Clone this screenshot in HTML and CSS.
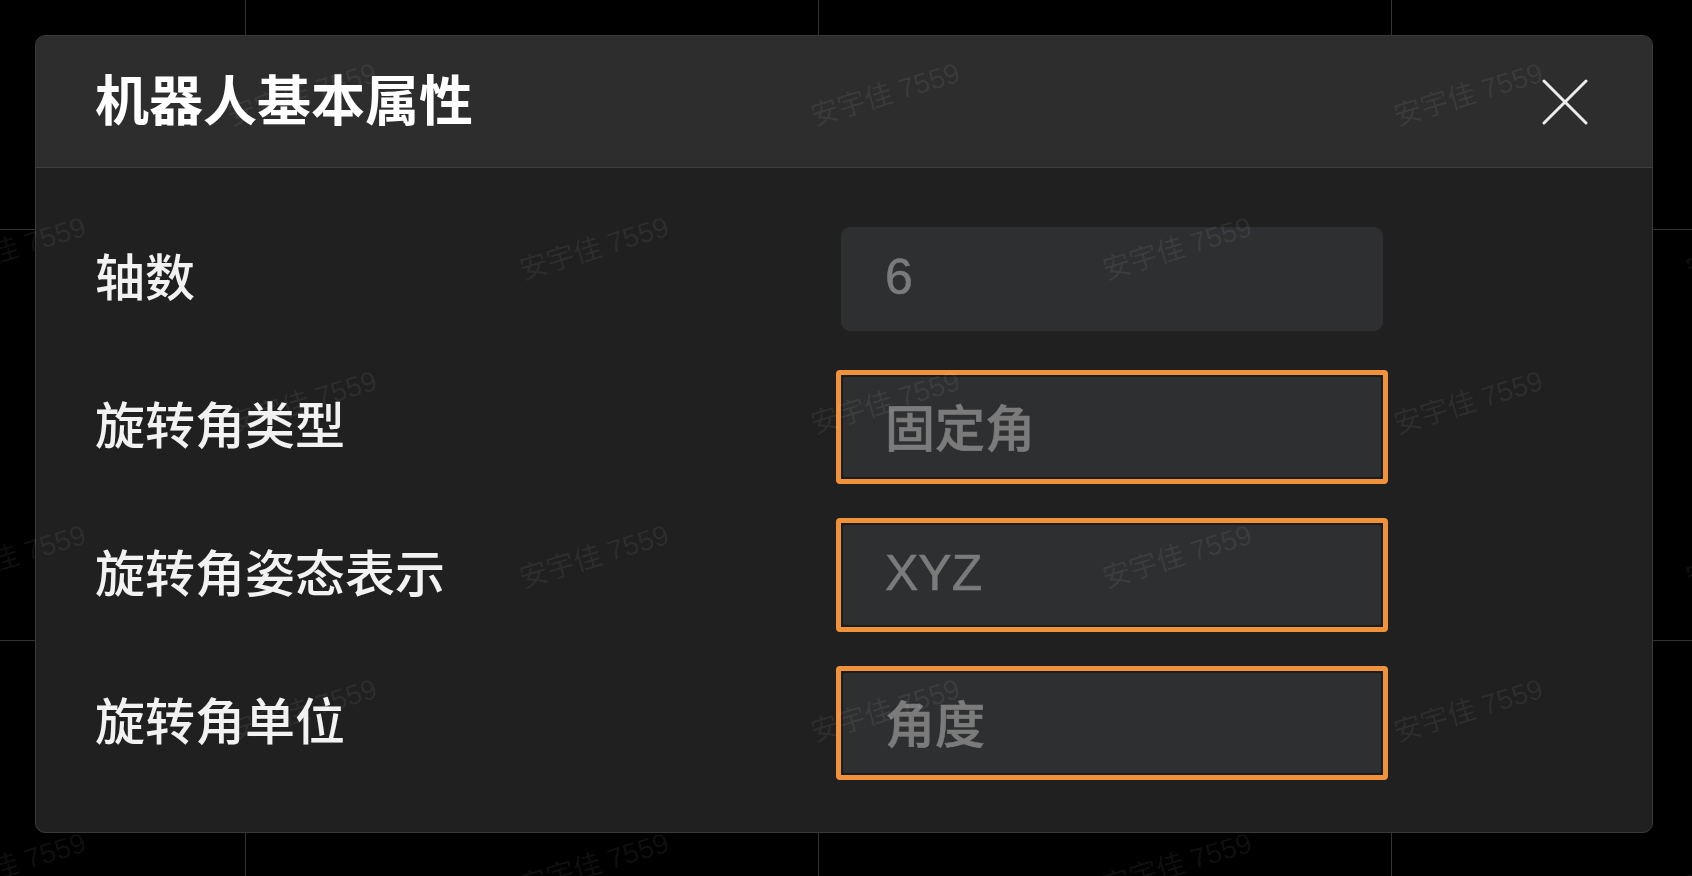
FILE: index.html
```html
<!DOCTYPE html>
<html lang="zh-CN">
<head>
  <meta charset="UTF-8">
  <meta name="viewport" content="width=device-width, initial-scale=1.0">
  <title>机器人基本属性</title>
  <link rel="stylesheet" href="styles.css">
</head>
<body>

  <div class="dialog" id="robotDialog">
    <div class="dialog-header">
      <h2 class="dialog-title">机器人基本属性</h2>
      <button class="close-btn" type="button" aria-label="关闭">
        <svg width="46" height="46" viewBox="0 0 46 46">
          <path d="M2 2 L44 44 M44 2 L2 44" stroke="#ececec" stroke-width="3" stroke-linecap="round" fill="none"/>
        </svg>
      </button>
    </div>

    <div class="dialog-body">
      <!-- Axis count -->
      <div class="form-row">
        <label for="axes">轴数</label>
        <div class="field">
          <input type="text" id="axes" value="6" readonly>
        </div>
      </div>

      <!-- Rotation type -->
      <div class="form-row">
        <label for="rotType">旋转角类型</label>
        <div class="field marked">
          <input type="text" id="rotType" value="固定角" readonly>
        </div>
      </div>

      <!-- Rotation notation -->
      <div class="form-row">
        <label for="rotOrder">旋转角姿态表示</label>
        <div class="field marked">
          <input type="text" id="rotOrder" value="XYZ" readonly>
        </div>
      </div>

      <!-- Rotation unit -->
      <div class="form-row">
        <label for="rotUnit">旋转角单位</label>
        <div class="field marked">
          <input type="text" id="rotUnit" value="角度" readonly>
        </div>
      </div>
    </div>
  </div>

  <!-- Watermark overlay -->
  <div class="watermark">
    <div class="wm-row"><span>安宇佳 7559</span><span>安宇佳 7559</span><span>安宇佳 7559</span></div>
    <div class="wm-row odd"><span>安宇佳 7559</span><span>安宇佳 7559</span><span>安宇佳 7559</span><span>安宇佳 7559</span></div>
    <div class="wm-row"><span>安宇佳 7559</span><span>安宇佳 7559</span><span>安宇佳 7559</span></div>
    <div class="wm-row odd"><span>安宇佳 7559</span><span>安宇佳 7559</span><span>安宇佳 7559</span><span>安宇佳 7559</span></div>
    <div class="wm-row"><span>安宇佳 7559</span><span>安宇佳 7559</span><span>安宇佳 7559</span></div>
    <div class="wm-row odd"><span>安宇佳 7559</span><span>安宇佳 7559</span><span>安宇佳 7559</span><span>安宇佳 7559</span></div>
  </div>

</body>
</html>
```

FILE: styles.css
```css
/* Page with faint grid behind the dialog */
html, body {
  margin: 0;
  padding: 0;
}

body {
  position: relative;
  width: 1692px;
  height: 876px;
  overflow: hidden;
  box-sizing: border-box;
  padding: 35px 0 0 35px;
  background-color: #000;
  background-image:
    linear-gradient(90deg, transparent 245px, #333 245px, #333 246px, transparent 246px),
    linear-gradient(180deg, transparent 229px, #333 229px, #333 230px, transparent 230px);
  background-size: 573px 100%, 100% 411px;
  font-family: "Liberation Sans", "Noto Sans CJK SC", sans-serif;
}

/* Dialog */
.dialog {
  width: 1618px;
  height: 798px;
  box-sizing: border-box;
  border: 1px solid #3a3a3a;
  border-radius: 10px;
  background-color: #202020;
  overflow: hidden;
  display: flex;
  flex-direction: column;
}

.dialog-header {
  height: 132px;
  box-sizing: border-box;
  flex: 0 0 auto;
  background-color: #2d2d2d;
  border-bottom: 1px solid #3d3d3d;
  display: flex;
  align-items: center;
  justify-content: space-between;
  padding: 0 64px 0 59px;
}

.dialog-title {
  margin: 0;
  font-size: 54px;
  font-weight: 700;
  line-height: 1;
  color: #fff;
}

.close-btn {
  background: none;
  border: none;
  padding: 0;
  width: 46px;
  height: 46px;
  cursor: pointer;
}

.close-btn svg {
  display: block;
}

/* Form rows */
.dialog-body {
  padding: 54px 0 0 59px;
  display: flex;
  flex-direction: column;
  gap: 34px;
}

.form-row {
  display: grid;
  grid-template-columns: 741px 552px;
  align-items: center;
}

.form-row label {
  font-size: 50px;
  font-weight: 500;
  line-height: 1;
  color: #f2f2f2;
}

.field {
  border: 5px solid transparent;
  border-radius: 4px;
}

.field.marked {
  border-color: #f0923a; /* orange highlight */
}

.field input {
  display: block;
  width: 542px;
  height: 104px;
  box-sizing: border-box;
  margin: 0;
  padding: 0 0 4px 42px;
  border: 2px solid transparent;
  border-radius: 9px;
  background-color: #2e2f31;
  color: #7b7b7b;
  font-family: "Liberation Sans", "Noto Sans CJK SC", sans-serif;
  font-size: 50px;
  font-weight: 500;
  -webkit-text-stroke: 0.6px #7b7b7b;
  outline: none;
}

.field.marked input {
  border-color: #1d1d1d;
  border-radius: 4px;
}

/* Watermark overlay */
.watermark {
  position: absolute;
  top: 0;
  left: 0;
  width: 100%;
  height: 100%;
  padding-top: 15px;
  box-sizing: border-box;
  pointer-events: none;
  overflow: hidden;
}

.wm-row {
  display: flex;
  height: 154px;
  align-items: center;
  margin-left: 10px;
}

.wm-row.odd {
  margin-left: -281px;
}

.wm-row span {
  flex: 0 0 583px;
  text-align: center;
  font-size: 28px;
  white-space: nowrap;
  color: rgba(255, 255, 255, 0.07);
  transform: rotate(-17deg);
}
```
